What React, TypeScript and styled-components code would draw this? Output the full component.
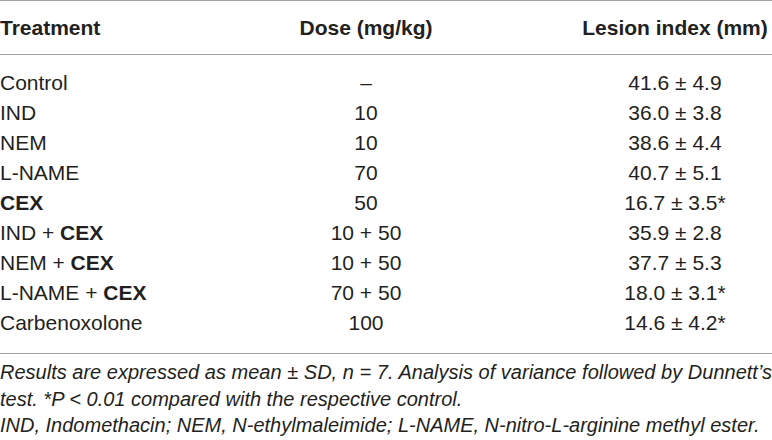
import React from 'react';
import styled, { createGlobalStyle } from 'styled-components';

const GlobalStyle = createGlobalStyle`
  html, body {
    margin: 0;
    padding: 0;
    background: #ffffff;
  }
  body {
    font-family: "Liberation Sans", Arial, sans-serif;
    color: #231f20;
  }
`;

const Page = styled.div`
  width: 772px;
  height: 440px;
  overflow: hidden;
`;

const Table = styled.table`
  width: 772px;
  border-collapse: collapse;
  table-layout: fixed;
  border-top: 1px solid #a0a0a0;
  border-bottom: 1px solid #a0a0a0;
`;

const HeadRow = styled.tr`
  border-bottom: 1px solid #a0a0a0;
`;

const HeadCell = styled.th<{ $align?: string }>`
  font-size: 21px;
  line-height: 30px;
  font-weight: 700;
  text-align: ${(p) => p.$align || 'center'};
  padding: 12px 0 11px;
  white-space: nowrap;
`;

const Cell = styled.td<{ $align?: string; $top?: boolean; $bottom?: boolean }>`
  font-size: 21px;
  line-height: 30px;
  text-align: ${(p) => p.$align || 'center'};
  padding: ${(p) => (p.$top ? '13px' : '0')} 0 ${(p) => (p.$bottom ? '15px' : '0')};
  white-space: nowrap;
`;

const Drug = styled.b`
  font-weight: 700;
`;

const Notes = styled.div`
  padding-top: 5px;
  font-size: 20px;
  line-height: 26.5px;
  font-style: italic;
`;

const Note = styled.p`
  margin: 0;
  text-align: justify;
`;

type Row = { name: React.ReactNode; dose: string; lesion: string };

const rows: Row[] = [
  { name: 'Control', dose: '–', lesion: '41.6 ± 4.9' },
  { name: 'IND', dose: '10', lesion: '36.0 ± 3.8' },
  { name: 'NEM', dose: '10', lesion: '38.6 ± 4.4' },
  { name: 'L-NAME', dose: '70', lesion: '40.7 ± 5.1' },
  { name: <Drug>CEX</Drug>, dose: '50', lesion: '16.7 ± 3.5*' },
  { name: <>IND + <Drug>CEX</Drug></>, dose: '10 + 50', lesion: '35.9 ± 2.8' },
  { name: <>NEM + <Drug>CEX</Drug></>, dose: '10 + 50', lesion: '37.7 ± 5.3' },
  { name: <>L-NAME + <Drug>CEX</Drug></>, dose: '70 + 50', lesion: '18.0 ± 3.1*' },
  { name: 'Carbenoxolone', dose: '100', lesion: '14.6 ± 4.2*' },
];

const App = () => {
  return (
    <Page>
      <GlobalStyle />
      <Table>
        <colgroup>
          <col style={{ width: '154px' }} />
          <col style={{ width: '424px' }} />
          <col />
        </colgroup>
        <thead>
          <HeadRow>
            <HeadCell $align="left">Treatment</HeadCell>
            <HeadCell>Dose (mg/kg)</HeadCell>
            <HeadCell>Lesion index (mm)</HeadCell>
          </HeadRow>
        </thead>
        <tbody>
          {rows.map((r, i) => (
            <tr key={i}>
              <Cell $align="left" $top={i === 0} $bottom={i === rows.length - 1}>{r.name}</Cell>
              <Cell $top={i === 0} $bottom={i === rows.length - 1}>{r.dose}</Cell>
              <Cell $top={i === 0} $bottom={i === rows.length - 1}>{r.lesion}</Cell>
            </tr>
          ))}
        </tbody>
      </Table>
      <Notes>
        <Note>
          Results are expressed as mean ± SD, n = 7. Analysis of variance followed by Dunnett’s test. *P &lt; 0.01 compared with the respective control.
        </Note>
        <Note>IND, Indomethacin; NEM, N-ethylmaleimide; L-NAME, N-nitro-L-arginine methyl ester.</Note>
      </Notes>
    </Page>
  );
};

export default App;
